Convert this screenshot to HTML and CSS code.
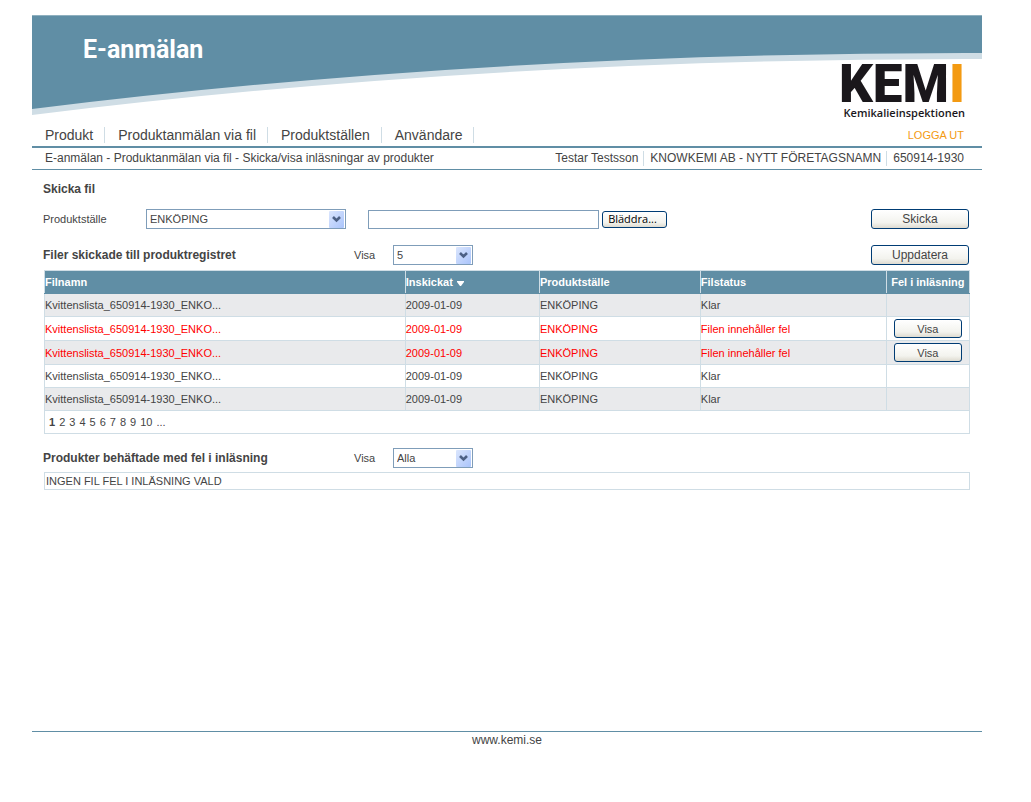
FILE: index.html
```html
<!DOCTYPE html>
<html lang="sv">
<head>
<meta charset="utf-8">
<title>E-anmälan</title>
<link rel="stylesheet" href="styles.css">
</head>
<body>
<div class="page">
  <header class="banner">
    <svg class="banner-wave" viewBox="0 0 950 100" preserveAspectRatio="none" aria-hidden="true">
      <path d="M0 0H950V44Q460 43 0 100Z" fill="#cfdde5"/>
      <path d="M0 0H950V38Q460 37 0 94Z" fill="#608ea5"/>
      <path d="M0 0H950V1H0Z" fill="#8fb0bf"/>
    </svg>
    <h1 class="banner-title">E-anmälan</h1>
    <div class="logo">
      <span class="logo-name">KEM<span class="logo-bar">I</span></span>
      <span class="logo-sub">Kemikalieinspektionen</span>
    </div>
  </header>
  <nav class="menu">
    <ul class="menu-list">
      <li><a href="#">Produkt</a></li>
      <li><a href="#">Produktanmälan via fil</a></li>
      <li><a href="#">Produktställen</a></li>
      <li><a href="#">Användare</a></li>
    </ul>
    <a class="logout" href="#">LOGGA UT</a>
  </nav>
  <div class="crumbs">
    <span>E-anmälan - Produktanmälan via fil - Skicka/visa inläsningar av produkter</span>
    <ul class="user">
      <li>Testar Testsson</li>
      <li>KNOWKEMI AB - NYTT FÖRETAGSNAMN</li>
      <li>650914-1930</li>
    </ul>
  </div>

  <main class="content">
    <h2 class="heading">Skicka fil</h2>
    <form class="send">
      <label class="send-label" for="site">Produktställe</label>
      <div class="drop drop-wide">
        <select id="site"><option>ENKÖPING</option></select>
        <svg class="drop-arrow" viewBox="0 0 15 17" aria-hidden="true"><use href="#arrow"/></svg>
      </div>
      <input class="file-name" type="text" aria-label="Fil">
      <button class="btn btn-browse" type="button">Bläddra...</button>
      <button class="btn btn-main" type="button">Skicka</button>
    </form>

    <div class="bar">
      <h2 class="heading">Filer skickade till produktregistret</h2>
      <label for="count">Visa</label>
      <div class="drop">
        <select id="count"><option>5</option></select>
        <svg class="drop-arrow" viewBox="0 0 15 17" aria-hidden="true"><use href="#arrow"/></svg>
      </div>
      <button class="btn btn-main" type="button">Uppdatera</button>
    </div>

    <table class="files">
      <colgroup><col class="c-name"><col class="c-date"><col class="c-site"><col class="c-status"><col class="c-error"></colgroup>
      <thead>
        <tr>
          <th>Filnamn</th>
          <th>Inskickat <svg class="sort" viewBox="0 0 7 5" aria-hidden="true"><path d="M0 0H7V1L4 5H3L0 1Z" fill="#fff"/></svg></th>
          <th>Produktställe</th><th>Filstatus</th><th class="center">Fel i inläsning</th>
        </tr>
      </thead>
      <tbody>
        <tr><td>Kvittenslista_650914-1930_ENKO...</td><td>2009-01-09</td><td>ENKÖPING</td><td>Klar</td><td></td></tr>
        <tr class="failed"><td>Kvittenslista_650914-1930_ENKO...</td><td>2009-01-09</td><td>ENKÖPING</td><td>Filen innehåller fel</td><td class="center"><button class="btn btn-row" type="button">Visa</button></td></tr>
        <tr class="failed"><td>Kvittenslista_650914-1930_ENKO...</td><td>2009-01-09</td><td>ENKÖPING</td><td>Filen innehåller fel</td><td class="center"><button class="btn btn-row" type="button">Visa</button></td></tr>
        <tr><td>Kvittenslista_650914-1930_ENKO...</td><td>2009-01-09</td><td>ENKÖPING</td><td>Klar</td><td></td></tr>
        <tr><td>Kvittenslista_650914-1930_ENKO...</td><td>2009-01-09</td><td>ENKÖPING</td><td>Klar</td><td></td></tr>
      </tbody>
      <tfoot>
        <tr><td colspan="5"><div class="pager"><b>1</b><a href="#">2</a><a href="#">3</a><a href="#">4</a><a href="#">5</a><a href="#">6</a><a href="#">7</a><a href="#">8</a><a href="#">9</a><a href="#">10</a><a href="#">...</a></div></td></tr>
      </tfoot>
    </table>

    <div class="bar bar-errors">
      <h2 class="heading">Produkter behäftade med fel i inläsning</h2>
      <label for="filter">Visa</label>
      <div class="drop">
        <select id="filter"><option>Alla</option></select>
        <svg class="drop-arrow" viewBox="0 0 15 17" aria-hidden="true"><use href="#arrow"/></svg>
      </div>
    </div>
    <p class="empty">INGEN FIL FEL I INLÄSNING VALD</p>
  </main>

  <footer class="footer"><a href="#">www.kemi.se</a></footer>
</div>
<svg class="defs" aria-hidden="true">
  <defs>
    <linearGradient id="shade" x1="0" y1="0" x2="1" y2="1"><stop offset="0" stop-color="#dbe6fd"/><stop offset="1" stop-color="#aac4fb"/></linearGradient>
    <symbol id="arrow" viewBox="0 0 15 17">
      <rect width="15" height="17" rx="1" fill="url(#shade)"/>
      <path d="M4 6L7.500 9.500L11 6" fill="none" stroke="#4d6185" stroke-width="2.600"/>
    </symbol>
  </defs>
</svg>
</body>
</html>
```
FILE: styles.css
```css
* { box-sizing: border-box; }

body {
  margin: 0;
  background: #fff;
  color: #444;
  font: 11px/14px "Liberation Sans", Arial, sans-serif;
}

a { color: inherit; text-decoration: none; }
ul { list-style: none; margin: 0; padding: 0; }

.defs { display: block; width: 0; height: 0; }

.page { padding: 15px 49px 40px 32px; }

/* Banner */
.banner {
  position: relative;
  display: flex;
  justify-content: space-between;
  align-items: flex-start;
  height: 109px;
  padding: 0 17px 0 51px;
}
.banner-wave { position: absolute; top: 0; left: 0; width: 100%; height: 100px; }
.banner-title {
  position: relative;
  margin: 18px 0 0;
  color: #fff;
  font: bold 25px/34px Roboto, sans-serif;
}
.logo { position: relative; display: flex; flex-direction: column; align-items: flex-end; padding-top: 50px; }
.logo-name { color: #1a171b; font: 900 53px/39px Roboto, sans-serif; }
.logo-bar { color: #f39a12; }
.logo-sub { margin-top: 1px; color: #1a171b; font: 600 11px/16px "Open Sans", sans-serif; }

/* Menu */
.menu {
  display: flex;
  justify-content: space-between;
  align-items: center;
  padding: 3px 18px 3px 0;
  border-bottom: 2px solid #608ea5;
}
.menu-list { display: flex; font-size: 14px; line-height: 16px; }
.menu-list li { padding: 0 11px 0 13px; border-right: 1px solid #cfdde5; }
.logout { color: #f39a12; font-size: 11px; line-height: 14px; }

.crumbs {
  display: flex;
  justify-content: space-between;
  align-items: center;
  padding: 3px 18px 3px 13px;
  border-bottom: 1px solid #608ea5;
  font-size: 12px;
  line-height: 15px;
}
.user { display: flex; }
.user li + li { margin-left: 5px; padding-left: 6px; border-left: 1px solid #cfdde5; }

/* Content */
.content { min-height: 561px; padding: 12px 12px 0 11px; }
.heading { margin: 0; font-size: 12px; line-height: 14px; font-weight: bold; }

.send { display: flex; align-items: center; margin-top: 13px; }
.send-label { width: 103px; }

.drop { display: grid; width: 80px; }
.drop-wide { width: 200px; }
.drop select,
.drop-arrow { grid-area: 1 / 1; }
.drop select {
  appearance: none;
  width: 100%;
  height: 20px;
  margin: 0;
  padding: 0 20px 0 3px;
  border: 1px solid #7f9db9;
  border-radius: 0;
  background: #fff;
  color: #444;
  font: inherit;
}
.drop-arrow {
  justify-self: end;
  align-self: center;
  width: 15px;
  height: 17px;
  margin-right: 2px;
  pointer-events: none;
}

.file-name {
  width: 231px;
  height: 19px;
  margin: 0 3px 0 22px;
  padding: 0 3px;
  border: 1px solid #7f9db9;
  font: inherit;
}

.btn {
  padding: 0;
  border: 1px solid #003c74;
  border-radius: 3px;
  background: linear-gradient(#fff, #f3f3ee 70%, #dedbd0);
  color: #444;
  font: 12px/14px "Liberation Sans", Arial, sans-serif;
}
.btn-main { width: 98px; height: 20px; margin-left: auto; margin-right: 1px; }
.btn-browse { width: 65px; height: 17px; padding-right: 4px; color: #000; font: 11px/14px "Open Sans", sans-serif; }
.btn-row { display: block; width: 68px; height: 19px; margin: 0 auto; font-size: 11px; }

.bar { display: grid; grid-template-columns: 311px 39px 80px 1fr; align-items: center; margin: 16px 0 5px; }
.bar-errors { margin: 14px 0 4px; }

.files {
  width: calc(100% - 1px);
  margin-left: 1px;
  border-collapse: collapse;
  table-layout: fixed;
}
.c-name { width: 39%; }
.c-date { width: 14.500%; }
.c-site { width: 17.400%; }
.c-status { width: 20.100%; }
.c-error { width: 9%; }
.files th,
.files td { height: 23px; padding: 0; border: 1px solid #cfdde5; text-align: left; white-space: nowrap; }
.files th { border-bottom-color: #608ea5; background: #608ea5; color: #fff; font-weight: bold; }
.files .center { text-align: center; }
.files tbody tr:nth-child(odd) { background: #e9eaec; }
.files .failed { color: #f00; }
.files .failed td { height: 24px; }
.sort { width: 7px; height: 5px; margin-left: 1px; }

.pager { display: flex; gap: 4px; padding-left: 4px; }

.empty { margin: 0 0 0 1px; padding: 1px; border: 1px solid #cfdde5; }

.footer { padding-top: 1px; border-top: 1px solid #608ea5; text-align: center; font-size: 12px; line-height: 14px; }
```
